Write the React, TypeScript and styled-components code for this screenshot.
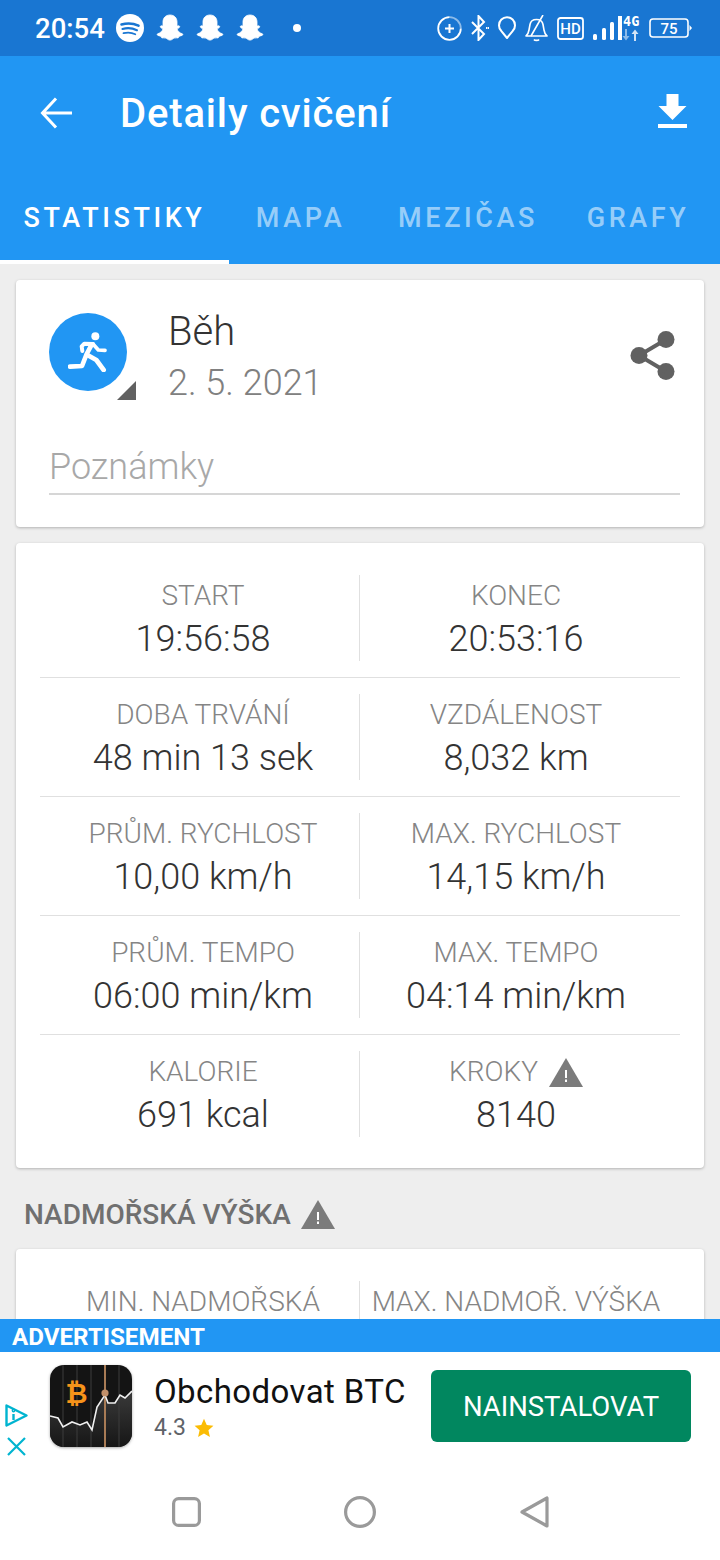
import React from "react";
import styled, { createGlobalStyle } from "styled-components";

const GlobalStyle = createGlobalStyle`
  html, body {
    margin: 0;
    padding: 0;
    background: #eeeeee;
  }
  * {
    box-sizing: border-box;
  }
`;

const Screen = styled.div`
  width: 720px;
  height: 1560px;
  display: flex;
  flex-direction: column;
  overflow: hidden;
  font-family: Roboto, "Liberation Sans", sans-serif;
  background: #eeeeee;
`;

const StatusBar = styled.div`
  height: 56px;
  flex: none;
  background: #1976d2;
  display: flex;
  align-items: center;
  padding: 0 28px 0 35px;
  color: #fff;
`;

const Clock = styled.span`
  font-size: 27.5px;
  font-weight: 500;
  width: 81px;
`;

const StatusLeft = styled.div`
  display: flex;
  align-items: center;
  gap: 12px;
`;

const StatusRight = styled.div`
  margin-left: auto;
  display: flex;
  align-items: center;
  gap: 9px;
`;

const NotifDot = styled.span`
  width: 8px;
  height: 8px;
  border-radius: 50%;
  background: #fff;
  margin-left: 17px;
`;

const AppBar = styled.div`
  height: 112px;
  flex: none;
  background: #2196f3;
  display: flex;
  align-items: center;
  padding: 2px 33px 0 40px;
  color: #fff;
`;

const Title = styled.h1`
  margin: 0 0 0 48px;
  font-size: 40px;
  font-weight: 500;
  letter-spacing: 0.85px;
`;

const AppBarAction = styled.div`
  margin-left: auto;
  margin-bottom: 4px;
  display: flex;
`;

const Tabs = styled.div`
  height: 96px;
  flex: none;
  background: #2196f3;
  display: flex;
`;

const Tab = styled.div<{ $active?: boolean; $width: number }>`
  width: ${(p) => p.$width}px;
  display: flex;
  align-items: center;
  justify-content: center;
  padding-top: 8px;
  font-size: 27px;
  font-weight: 500;
  letter-spacing: 3.6px;
  color: ${(p) => (p.$active ? "#ffffff" : "rgba(255,255,255,0.55)")};
  border-bottom: 4px solid ${(p) => (p.$active ? "#ffffff" : "transparent")};
`;

const Content = styled.div`
  flex: 1;
  min-height: 0;
  overflow: hidden;
  padding: 16px 16px 0;
  display: flex;
  flex-direction: column;
  gap: 16px;
`;

const Card = styled.div`
  flex: none;
  background: #fff;
  border-radius: 4px;
  box-shadow: 0 1px 3px rgba(0, 0, 0, 0.25);
`;

const HeaderCard = styled(Card)`
  height: 247px;
  padding: 33px 29px 0 33px;
`;

const ActivityRow = styled.div`
  display: flex;
  align-items: flex-start;
`;

const ActivityIcon = styled.div`
  position: relative;
  width: 78px;
  height: 78px;
  flex: none;
  border-radius: 50%;
  background: #2196f3;
  display: flex;
  align-items: center;
  justify-content: center;
`;

const Corner = styled.div`
  position: absolute;
  left: 68px;
  top: 68px;
  width: 19px;
  height: 19px;
  background: #616161;
  clip-path: polygon(100% 0, 100% 100%, 0 100%);
`;

const ActivityText = styled.div`
  margin-left: 41px;
  margin-top: -4px;
`;

const ActivityName = styled.div`
  font-size: 40px;
  font-weight: 300;
  line-height: 46px;
  color: #333333;
`;

const ActivityDate = styled.div`
  font-size: 36px;
  font-weight: 300;
  line-height: 46px;
  margin-top: 5px;
  color: #808080;
`;

const ShareButton = styled.div`
  margin-left: auto;
  margin-top: 18px;
`;

const Notes = styled.div`
  margin-top: 38px;
  height: 51px;
  width: 631px;
  border-bottom: 2px solid #d6d6d6;
  font-size: 36px;
  font-weight: 300;
  line-height: 46px;
  color: #a8a8a8;
`;

const StatsCard = styled(Card)`
  padding: 16px 24px 15px;
`;

const StatsRow = styled.div`
  display: grid;
  grid-template-columns: 312px 313px;
  padding: 16px 8px 16px 7px;
  border-bottom: 1px solid #e0e0e0;

  &:last-child {
    border-bottom: none;
  }
`;

const StatCell = styled.div`
  height: 86px;
  display: flex;
  flex-direction: column;
  align-items: center;

  & + & {
    border-left: 1px solid #e0e0e0;
  }
`;

const StatLabel = styled.div`
  display: flex;
  align-items: center;
  gap: 11px;
  font-size: 28px;
  font-weight: 300;
  line-height: 42px;
  color: #858585;
  white-space: nowrap;
`;

const StatValue = styled.div`
  font-size: 36px;
  font-weight: 300;
  line-height: 44px;
  color: #333333;
  white-space: nowrap;
`;

const SectionTitle = styled.div`
  flex: none;
  display: flex;
  align-items: center;
  gap: 10px;
  height: 49px;
  padding: 11px 0 0 8px;
  font-size: 28px;
  font-weight: 500;
  color: #707070;
`;

const AdLabel = styled.div`
  height: 33px;
  flex: none;
  background: #2196f3;
  color: #fff;
  font-size: 24.2px;
  font-weight: 700;
  line-height: 36px;
  padding-left: 12px;
`;

const AdBanner = styled.div`
  height: 118px;
  flex: none;
  background: #fff;
  display: flex;
  align-items: center;
`;

const AdChoices = styled.div`
  width: 50px;
  height: 100%;
  flex: none;
  display: flex;
  flex-direction: column;
  align-items: center;
  justify-content: flex-end;
  gap: 10px;
  padding: 0 17px 14px 0;
`;

const AppTile = styled.div`
  width: 82px;
  height: 82px;
  flex: none;
  border-radius: 14px;
  overflow: hidden;
  margin-top: -10px;
  box-shadow: 0 1px 3px rgba(0, 0, 0, 0.35);
`;

const AdInfo = styled.div`
  margin-left: 22px;
  width: 277px;
  flex: none;
  margin-top: -7px;
`;

const AdName = styled.div`
  font-size: 33px;
  font-weight: 400;
  line-height: 40px;
  letter-spacing: 0.4px;
  color: #111;
  white-space: nowrap;
`;

const AdRating = styled.div`
  display: flex;
  align-items: center;
  gap: 8px;
  font-size: 23px;
  line-height: 32px;
  color: #5f6368;
`;

const InstallButton = styled.div`
  width: 260px;
  height: 72px;
  flex: none;
  margin-top: -10px;
  border-radius: 6px;
  background: #01875f;
  color: #fff;
  font-size: 27.5px;
  display: flex;
  align-items: center;
  justify-content: center;
`;

const NavBar = styled.div`
  height: 90px;
  flex: none;
  background: #fff;
  display: flex;
  align-items: flex-start;
  padding: 0 0 0 163px;
  gap: 128px;
`;

const NavSlot = styled.div`
  width: 46px;
  height: 46px;
  margin-top: 19px;
  display: flex;
  align-items: center;
  justify-content: center;
`;

const Snapchat = () => (
  <svg width="28" height="28" viewBox="0 0 28 28" fill="#fff" stroke="#fff" strokeWidth="0.8">
    <path d="M14 1c4.400 0 7 3 7 7v4c.6.3 1.600-.5 2.300 0 .8.6.2 1.500-.6 2-.8.4-1.500.6-1.400 1.200.4 2 2.300 3.700 5 4.600.8.3.6 1.200-.2 1.600-1 .5-2.300.5-3 .9-.5.4-.3 1.500-1 1.600-1 .2-2.400-.3-3.800.2-1.600.6-2.400 2-4.300 2s-2.700-1.400-4.300-2c-1.400-.5-2.800 0-3.800-.2-.7-.1-.5-1.200-1-1.600-.7-.4-2-.4-3-.9-.8-.4-1-1.300-.2-1.600 2.700-.9 4.600-2.600 5-4.600.1-.6-.6-.8-1.400-1.200-.8-.5-1.400-1.400-.6-2 .7-.5 1.700.3 2.300 0V8c0-4 2.600-7 7-7z" />
  </svg>
);

const Spotify = () => (
  <svg width="28" height="28" viewBox="0 0 28 28">
    <circle cx="14" cy="14" r="14" fill="#fff" />
    <g fill="none" stroke="#1976d2" strokeLinecap="round">
      <path d="M5.500 10.500c5.500-1.600 12-1.200 17 1.200" strokeWidth="2.600" />
      <path d="M6.500 15c4.600-1.300 10-.9 14.400 1.200" strokeWidth="2.200" />
      <path d="M7.500 19.200c4-1 8.200-.7 11.800 1" strokeWidth="1.800" />
    </g>
  </svg>
);

const SyncPlus = () => (
  <svg width="25" height="25" viewBox="0 0 25 25" fill="none" stroke="#fff" strokeWidth="1.800">
    <path d="M12.500 1.200A11.300 11.300 0 1 0 23.800 12.500" />
    <path d="M12.500 1.200A11.300 11.300 0 0 1 23.800 12.500" opacity="0.5" />
    <path d="M8 12.500h9M12.500 8v9" strokeWidth="2" />
  </svg>
);

const Bluetooth = () => (
  <svg width="18" height="26" viewBox="0 0 18 26" fill="none" stroke="#fff" strokeWidth="2">
    <path d="M1 7l12 12-5.500 6V1L13 7 1 19" />
    <path d="M15 13h3" strokeDasharray="1.500 0.500" />
  </svg>
);

const Pin = () => (
  <svg width="18" height="24" viewBox="0 0 18 24" fill="none" stroke="#fff" strokeWidth="2">
    <path d="M9 22L3.200 14.800A8 8 0 1 1 14.800 14.800z" strokeLinejoin="round" />
  </svg>
);

const BellOff = () => (
  <svg width="23" height="27" viewBox="0 0 23 27" fill="none" stroke="#fff" strokeWidth="1.600">
    <path d="M1 21c2-1.500 2.500-3 3-6l1-5.500C5.500 6.500 8 4.500 11.500 4.500s6 2 6.500 5l1 5.500c.5 3 1 4.500 3 6z" strokeLinejoin="round" />
    <path d="M9 24.500c.7 1.200 4.300 1.200 5 0M18 0L6 21" />
  </svg>
);

const HdBadge = () => (
  <svg width="27" height="23" viewBox="0 0 27 23">
    <rect x="1" y="1" width="25" height="21" rx="2.500" fill="none" stroke="#fff" strokeWidth="1.800" />
    <text x="13.500" y="17.200" textAnchor="middle" fontSize="15" fontWeight="500" fontFamily="Roboto, sans-serif" fill="#fff">
      HD
    </text>
  </svg>
);

const Signal = () => (
  <svg width="47" height="26" viewBox="0 0 47 26" overflow="visible">
    <g fill="#fff">
      <rect x="0" y="19" width="4" height="6" rx="1.500" />
      <rect x="9" y="13" width="4" height="12" rx="1.500" />
      <rect x="17" y="7" width="4" height="18" rx="1.500" />
      <rect x="25" y="1" width="4" height="24" />
      <text x="30" y="11" fontSize="13.500" fontWeight="700" fontFamily="'DejaVu Sans Mono', monospace">
        4G
      </text>
      <path d="M32 14v7h-2.500l3.500 4.500 3.500-4.500H34v-7z" opacity="0.5" />
      <path d="M41 26v-7h-2.500l3.500-4.500 3.500 4.500H43v7z" opacity="0.8" />
    </g>
  </svg>
);

const Battery = () => (
  <svg width="43" height="20" viewBox="0 0 43 20">
    <rect x="1" y="1" width="38" height="18" rx="3" fill="none" stroke="#fff" strokeWidth="1.600" />
    <path d="M40.500 7l2.500 3-2.500 3z" fill="#fff" />
    <text x="20" y="15.800" textAnchor="middle" fontSize="15" fontWeight="500" fontFamily="Roboto, sans-serif" fill="#fff">
      75
    </text>
  </svg>
);

const BackArrow = () => (
  <svg width="32" height="32" viewBox="0 0 32 32" fill="none" stroke="#fff" strokeWidth="3">
    <path d="M32 16H3M16 1.500L2.500 16 16 30.500" />
  </svg>
);

const Download = () => (
  <svg width="29" height="34" viewBox="0 0 29 34" fill="#fff">
    <path d="M8.500 0h12v12h8L14.500 26 .5 12h8zM0 30h29v4H0z" />
  </svg>
);

const Runner = () => (
  <svg width="40" height="40" viewBox="115 95 120 120" fill="none" stroke="#fff" strokeLinecap="round" strokeLinejoin="round">
    <circle cx="197" cy="108" r="12" fill="#fff" stroke="none" />
    <path d="M190 131l-26-1-8 8 2 14" strokeWidth="12" />
    <path d="M190 131l16 18 20 1" strokeWidth="11" />
    <path d="M186 133l-15 28-14 36-36 2" strokeWidth="14" />
    <path d="M172 163l28 16 22 30" strokeWidth="14" />
  </svg>
);

const Share = () => (
  <svg width="45" height="49" viewBox="0 0 45 49">
    <g fill="#616161">
      <circle cx="36" cy="8.500" r="8.500" />
      <circle cx="9" cy="24.500" r="8.500" />
      <circle cx="36" cy="40.500" r="8.500" />
    </g>
    <path d="M36 8.500L9 24.500l27 16" fill="none" stroke="#616161" strokeWidth="4" />
  </svg>
);

const Warning = () => (
  <svg width="34" height="29" viewBox="0 0 34 29">
    <path d="M17 0l17 29H0z" fill="#7b7b7b" />
    <rect x="16" y="12" width="2" height="8" fill="#fff" />
    <rect x="16" y="21.500" width="2" height="2.500" fill="#fff" />
  </svg>
);

const chartLine = "M0 51l8 2 5 9 9-5 8 3 7-3 5 8 5-23 8-12 3 8h7l5-8 5 3 7-7";

const BitcoinTile = () => (
  <svg width="82" height="82" viewBox="0 0 82 82">
    <defs>
      <linearGradient id="chartFill" x1="0" y1="0" x2="0" y2="1">
        <stop offset="0" stopColor="#3a3a3a" />
        <stop offset="1" stopColor="#161616" />
      </linearGradient>
    </defs>
    <rect width="82" height="82" fill="#141414" />
    <path d={`${chartLine}v56H0z`} fill="url(#chartFill)" />
    <path d="M13 0v82M27 0v82M41 0v82M69 0v82" stroke="#3c3c3c" strokeWidth="1" />
    <path d="M55 0v82" stroke="#a87b55" strokeWidth="2" />
    <path d={chartLine} fill="none" stroke="#f0f0f0" strokeWidth="1.600" />
    <circle cx="55" cy="28" r="3.600" fill="#c2906a" />
    <text x="26.500" y="38" textAnchor="middle" fontSize="27" fontWeight="700" fontFamily="Roboto, sans-serif" fill="#f7931a">
      ₿
    </text>
  </svg>
);

const AdChoicesMark = () => (
  <svg width="23" height="23" viewBox="0 0 23 23" fill="none" stroke="#00b4d0" strokeWidth="2.400" strokeLinejoin="round">
    <path d="M1.500 1.500l20 10-20 10z" />
    <path d="M8.500 10v6" />
    <circle cx="8.500" cy="6.500" r="0.700" />
  </svg>
);

const AdClose = () => (
  <svg width="19" height="19" viewBox="0 0 19 19" stroke="#00b4d0" strokeWidth="2.200">
    <path d="M1 1l17 17M18 1L1 18" />
  </svg>
);

const stats: { label: string; value: string; warn?: boolean }[][] = [
  [
    { label: "START", value: "19:56:58" },
    { label: "KONEC", value: "20:53:16" },
  ],
  [
    { label: "DOBA TRVÁNÍ", value: "48 min 13 sek" },
    { label: "VZDÁLENOST", value: "8,032 km" },
  ],
  [
    { label: "PRŮM. RYCHLOST", value: "10,00 km/h" },
    { label: "MAX. RYCHLOST", value: "14,15 km/h" },
  ],
  [
    { label: "PRŮM. TEMPO", value: "06:00 min/km" },
    { label: "MAX. TEMPO", value: "04:14 min/km" },
  ],
  [
    { label: "KALORIE", value: "691 kcal" },
    { label: "KROKY", value: "8140", warn: true },
  ],
];

const tabs = [
  { label: "STATISTIKY", width: 229, active: true },
  { label: "MAPA", width: 143 },
  { label: "MEZIČAS", width: 192 },
  { label: "GRAFY", width: 148 },
];

export default function App() {
  return (
    <Screen>
      <GlobalStyle />
      <StatusBar>
        <Clock>20:54</Clock>
        <StatusLeft>
          <Spotify />
          <Snapchat />
          <Snapchat />
          <Snapchat />
          <NotifDot />
        </StatusLeft>
        <StatusRight>
          <SyncPlus />
          <Bluetooth />
          <Pin />
          <BellOff />
          <HdBadge />
          <Signal />
          <Battery />
        </StatusRight>
      </StatusBar>
      <AppBar>
        <BackArrow />
        <Title>Detaily cvičení</Title>
        <AppBarAction>
          <Download />
        </AppBarAction>
      </AppBar>
      <Tabs>
        {tabs.map((t) => (
          <Tab key={t.label} $active={t.active} $width={t.width}>
            {t.label}
          </Tab>
        ))}
      </Tabs>
      <Content>
        <HeaderCard>
          <ActivityRow>
            <ActivityIcon>
              <Runner />
              <Corner />
            </ActivityIcon>
            <ActivityText>
              <ActivityName>Běh</ActivityName>
              <ActivityDate>2. 5. 2021</ActivityDate>
            </ActivityText>
            <ShareButton>
              <Share />
            </ShareButton>
          </ActivityRow>
          <Notes>Poznámky</Notes>
        </HeaderCard>
        <StatsCard>
          {stats.map((row) => (
            <StatsRow key={row[0].label}>
              {row.map((s) => (
                <StatCell key={s.label}>
                  <StatLabel>
                    {s.label}
                    {s.warn && <Warning />}
                  </StatLabel>
                  <StatValue>{s.value}</StatValue>
                </StatCell>
              ))}
            </StatsRow>
          ))}
        </StatsCard>
        <SectionTitle>
          NADMOŘSKÁ VÝŠKA
          <Warning />
        </SectionTitle>
        <StatsCard>
          <StatsRow>
            <StatCell>
              <StatLabel>MIN. NADMOŘSKÁ</StatLabel>
            </StatCell>
            <StatCell>
              <StatLabel>MAX. NADMOŘ. VÝŠKA</StatLabel>
            </StatCell>
          </StatsRow>
        </StatsCard>
      </Content>
      <AdLabel>ADVERTISEMENT</AdLabel>
      <AdBanner>
        <AdChoices>
          <AdChoicesMark />
          <AdClose />
        </AdChoices>
        <AppTile>
          <BitcoinTile />
        </AppTile>
        <AdInfo>
          <AdName>Obchodovat BTC</AdName>
          <AdRating>
            4.3
            <svg width="20" height="20" viewBox="0 0 24 24" fill="#fbbc04">
              <path d="M12 1l3.300 7.500 8 .8-6 5.400 1.800 8L12 18.500 4.900 22.700l1.800-8-6-5.400 8-.8z" />
            </svg>
          </AdRating>
        </AdInfo>
        <InstallButton>NAINSTALOVAT</InstallButton>
      </AdBanner>
      <NavBar>
        <NavSlot>
          <svg width="29" height="30" viewBox="0 0 29 30" fill="none" stroke="#9a9a9a" strokeWidth="3.200">
            <rect x="1.600" y="1.600" width="25.800" height="26.800" rx="5" />
          </svg>
        </NavSlot>
        <NavSlot>
          <svg width="32" height="32" viewBox="0 0 32 32" fill="none" stroke="#9a9a9a" strokeWidth="3.200">
            <circle cx="16" cy="16" r="14.400" />
          </svg>
        </NavSlot>
        <NavSlot>
          <svg width="29" height="32" viewBox="0 0 29 32" fill="none" stroke="#9a9a9a" strokeWidth="3.200" strokeLinejoin="round">
            <path d="M27 2v28L2 16z" />
          </svg>
        </NavSlot>
      </NavBar>
    </Screen>
  );
}
